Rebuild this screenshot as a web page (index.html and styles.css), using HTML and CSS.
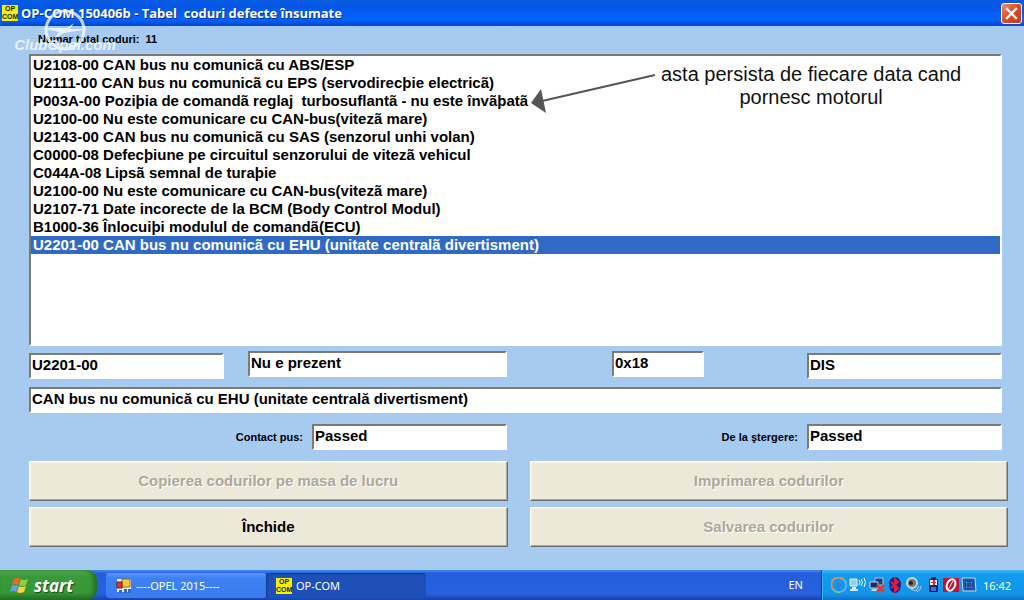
FILE: index.html
```
<!DOCTYPE html>
<html lang="ro">
<head>
  <meta charset="UTF-8">
  <meta name="viewport" content="width=device-width, initial-scale=1.0">
  <title>OP-COM 150406b</title>
  <link rel="stylesheet" href="styles.css">
</head>
<body>
  <header class="titlebar">
    <span class="opcom-icon">OP<br>COM</span>
    <h1>OP-COM 150406b - Tabel&nbsp; coduri defecte însumate</h1>
    <button class="close" aria-label="Close">
      <svg viewBox="0 0 21 21" width="21" height="21">
        <path d="M6 6l9 9M15 6l-9 9" stroke="#fff" stroke-width="2.4" stroke-linecap="square"/>
      </svg>
    </button>
  </header>

  <div class="watermark">
    <svg viewBox="0 0 50 44" width="50" height="44" fill="none">
      <circle cx="25" cy="22" r="19" stroke="#fff" stroke-width="3"/>
      <path d="M0 20h27l7-5-4 6h19l-25 4-10 6 5-7z" fill="#fff"/>
    </svg>
    <span>ClubOpel.com</span>
  </div>

  <main class="window">
    <label class="count" for="codes">Numar total coduri:&nbsp; 11</label>

    <div class="list-wrap">
      <select class="codes" id="codes" size="16">
        <option>U2108-00 CAN bus nu comunicã cu ABS/ESP</option>
        <option>U2111-00 CAN bus nu comunicã cu EPS (servodirecþie electricã)</option>
        <option>P003A-00 Poziþia de comandã reglaj&nbsp; turbosuflantã - nu este învãþatã</option>
        <option>U2100-00 Nu este comunicare cu CAN-bus(vitezã mare)</option>
        <option>U2143-00 CAN bus nu comunicã cu SAS (senzorul unhi volan)</option>
        <option>C0000-08 Defecþiune pe circuitul senzorului de vitezã vehicul</option>
        <option>C044A-08 Lipsã semnal de turaþie</option>
        <option>U2100-00 Nu este comunicare cu CAN-bus(vitezã mare)</option>
        <option>U2107-71 Date incorecte de la BCM (Body Control Modul)</option>
        <option>B1000-36 Înlocuiþi modulul de comandã(ECU)</option>
        <option selected>U2201-00 CAN bus nu comunicã cu EHU (unitate centralã divertisment)</option>
      </select>
      <div class="note">
        <svg viewBox="0 0 134 46" width="134" height="46">
          <path d="M131 6L18 32" stroke="#555" stroke-width="2"/>
          <path d="M7 34L17 20L22 44z" fill="#555"/>
        </svg>
        <p>asta persista de fiecare data cand<br>pornesc motorul</p>
      </div>
    </div>

    <div class="fields">
      <input class="f-code" type="text" value="U2201-00" aria-label="Cod">
      <input class="f-state" type="text" value="Nu e prezent" aria-label="Stare">
      <input class="f-hex" type="text" value="0x18" aria-label="Hex">
      <input class="f-unit" type="text" value="DIS" aria-label="Modul">
    </div>

    <input class="desc" type="text" value="CAN bus nu comunică cu EHU (unitate centrală divertisment)" aria-label="Descriere">

    <div class="checks">
      <label for="contact">Contact pus:</label>
      <input id="contact" type="text" value="Passed">
      <label for="clear">De la ştergere:</label>
      <input id="clear" type="text" value="Passed">
    </div>

    <div class="actions">
      <button disabled>Copierea codurilor pe masa de lucru</button>
      <button disabled>Imprimarea codurilor</button>
      <button>Închide</button>
      <button disabled>Salvarea codurilor</button>
    </div>
  </main>

  <footer class="taskbar">
    <button class="start">
      <svg viewBox="0 0 20 20" width="20" height="20">
        <path d="M4 4q3-2 6 0L8 10q-3-2-6 0z" fill="#f0652f"/>
        <path d="M11 4q3 2 7 0l-2 6q-3 2-7 0z" fill="#8fd03c"/>
        <path d="M2 11q3-2 6 0l-2 6q-3-2-6 0z" fill="#6b9cf5"/>
        <path d="M9 11q3 2 7 0l-2 6q-4 2-7 0z" fill="#fbd23c"/>
      </svg>
      start
    </button>
    <button class="task">
      <svg viewBox="0 0 16 16" width="16" height="16">
        <path d="M1 1h14v13H1z" fill="#e8edf8"/>
        <path d="M6 1h8v8H6z" fill="#f6c935" stroke="#8a6a20"/>
        <path d="M1 4h5v6H1z" fill="#d8392b" stroke="#7b1c14"/>
        <path d="M3 12h3v3H3zM8 11h3v4H8zM12 11h3v4h-3z" fill="#3c62b8"/>
      </svg>
      ----OPEL 2015----
    </button>
    <button class="task active">
      <span class="opcom-icon">OP<br>COM</span>
      OP-COM
    </button>
    <span class="lang">EN</span>
    <div class="tray">
      <svg viewBox="0 0 16 16" width="16" height="16" fill="none">
        <path d="M2 12A7 7 0 0 1 13 3" stroke="#f08a4b" stroke-width="2"/>
        <path d="M13 3a7 7 0 0 1-4 12" stroke="#5fb0ee" stroke-width="2"/>
        <path d="M9 15a7 7 0 0 1-7-3" stroke="#7fc47a" stroke-width="2"/>
        <path d="M6 5l5 3-5 4z" fill="#2f7fe0"/>
      </svg>
      <svg viewBox="0 0 18 16" width="18" height="16" fill="none">
        <path d="M1 2h7v7H1z" fill="#8fd0f8" stroke="#e6f4ff"/>
        <path d="M3 10h4v2h2v2H1v-2h2z" fill="#d9e6f2"/>
        <path d="M10 3q2 2 0 5M12 2q3 3 0 7M15 1q3 4 0 9" stroke="#fff"/>
      </svg>
      <svg viewBox="0 0 16 16" width="16" height="16">
        <path d="M6 1h8v7H6z" fill="#1d3f88" stroke="#b9c7dd"/>
        <path d="M1 5h8v6H1z" fill="#1b2f63" stroke="#c9d2e2"/>
        <path d="M3 12h5v2H2z" fill="#c9d2e2"/>
        <path d="M8 8l7 7M15 8l-7 7" stroke="#e8391f" stroke-width="2.5"/>
      </svg>
      <svg viewBox="0 0 16 16" width="16" height="16" fill="none">
        <ellipse cx="8" cy="8" rx="6" ry="8" fill="#10219c"/>
        <path d="M4 5l7 6-3 3V2l3 3-7 6" stroke="#f01c2c" stroke-width="2"/>
      </svg>
      <svg viewBox="0 0 18 16" width="18" height="16" fill="none">
        <circle cx="7" cy="6" r="5" fill="#777" stroke="#d3d3cc" stroke-width="2"/>
        <circle cx="6" cy="6" r="2" fill="#222"/>
        <path d="M6 12l5 2 3-5M12 15q4-2 4-6" stroke="#b8cbe0"/>
      </svg>
      <svg viewBox="0 0 16 16" width="16" height="16">
        <path d="M6 0h5v2h2v13H4V2h2z" fill="#14236f"/>
        <path d="M5 3h7v5H5z" fill="#fff"/>
        <path d="M8 3h2v2h1v1h-1v2H8V6H6V5h2z" fill="#df2a2a"/>
        <path d="M6 10h5v4H6z" fill="#3c70df"/>
      </svg>
      <svg viewBox="0 0 16 16" width="16" height="16" fill="none">
        <path d="M0 1h16v14H0z" fill="#c8102e"/>
        <ellipse cx="8" cy="8" rx="4" ry="6" transform="rotate(25 8 8)" stroke="#fff" stroke-width="2"/>
        <path d="M5 13l5-9" stroke="#fff"/>
      </svg>
      <svg viewBox="0 0 16 16" width="16" height="16">
        <path d="M1 1h13l1 13H2z" fill="#1c55a8" stroke="#bcd8f4"/>
        <path d="M5 5h6v6H5z" fill="#4d9be0"/>
        <path d="M4 7h8M4 9h8M7 4v8M9 4v8" stroke="#0c3d86"/>
      </svg>
      <time>16:42</time>
    </div>
  </footer>
</body>
</html>
```
FILE: styles.css
```
* {
  box-sizing: border-box;
}

body {
  margin: 0;
  min-height: 100vh;
  display: flex;
  flex-direction: column;
  position: relative;
  background: #a6caf0;
  color: #000;
  font-family: "Liberation Sans", Arial, sans-serif;
  font-size: 15px;
}

button,
input,
select {
  font: inherit;
  color: inherit;
  margin: 0;
}

/* title bar */
.titlebar {
  display: flex;
  align-items: center;
  height: 26px;
  padding: 0 2px;
  gap: 3px;
  background: linear-gradient(#0a5be0, #0458e8 30%, #0563fb 75%, #0446cc);
}

.titlebar h1 {
  flex: 1;
  margin: 0;
  color: #fff;
  font-family: "Open Sans", "Noto Sans", sans-serif;
  font-size: 13px;
  font-weight: bold;
  text-shadow: 1px 1px #0b2f8c;
}

.opcom-icon {
  width: 16px;
  height: 16px;
  background: #f8f000;
  color: #222;
  font: bold 7px/8px "Liberation Sans", Arial, sans-serif;
  text-align: center;
}

.close {
  width: 21px;
  height: 21px;
  padding: 0;
  border: 1px solid #fff;
  border-radius: 3px;
  background: linear-gradient(135deg, #f09070, #dc4a22 50%, #c63a14);
}

.close svg {
  display: block;
  margin: -1px;
}

.watermark {
  position: absolute;
  left: 15px;
  top: 8px;
  width: 100px;
  display: flex;
  flex-direction: column;
  align-items: center;
  color: #fff;
  font-size: 15px;
  font-weight: bold;
  font-style: italic;
  line-height: 16px;
  opacity: 0.75;
  pointer-events: none;
}

.watermark span {
  margin-top: -15px;
}

/* window */
.window {
  flex: 1;
  display: flex;
  flex-direction: column;
  padding: 5px 16px 23px 29px;
  font-weight: bold;
}

.count {
  padding: 0 9px;
  font-size: 11px;
  line-height: 16px;
  margin-bottom: 7px;
}

.list-wrap {
  flex: 1;
  display: flex;
  position: relative;
  margin-right: 6px;
}

.codes,
.window input {
  border: 2px solid;
  border-color: #7b7b72 #fff #fff #7b7b72;
  border-radius: 0;
  background: #fff;
  outline: none;
}

.codes {
  flex: 1;
  padding: 0;
  overflow: hidden;
}

.codes option {
  min-height: 18px;
  padding: 0 2px;
  font-weight: bold;
  line-height: 18px;
}

.codes option:checked {
  background: #316ac5 linear-gradient(#316ac5, #316ac5);
  color: #fff;
  -webkit-text-fill-color: #fff;
}

.note {
  position: absolute;
  left: 495px;
  top: 9px;
  display: flex;
  align-items: flex-start;
  pointer-events: none;
}

.note svg {
  margin-top: 6px;
}

.note p {
  margin: 0;
  padding-left: 3px;
  color: #111;
  font-size: 20px;
  font-weight: normal;
  line-height: 23px;
  text-align: center;
}

.window input {
  width: 100%;
  min-width: 0;
  height: 26px;
  padding: 0 1px 4px;
}

.fields {
  display: grid;
  grid-template-columns: 195fr 24fr 259fr 105fr 92fr 103fr 195fr;
  margin: 5px 6px 0 0;
}

.fields .f-code,
.fields .f-unit {
  margin-top: 2px;
}

.f-state {
  grid-column: 3;
}

.f-hex {
  grid-column: 5;
}

.f-unit {
  grid-column: 7;
}

.window .desc {
  width: auto;
  margin: 8px 6px 11px 0;
}

.checks {
  display: grid;
  grid-template-columns: 283fr 195fr 300fr 195fr;
  align-items: center;
  margin-right: 6px;
}

.checks label {
  padding-right: 9px;
  font-size: 11px;
  text-align: right;
}

.actions {
  display: grid;
  grid-template-columns: 1fr 1fr;
  gap: 6px 22px;
  margin-top: 11px;
}

.actions button {
  height: 40px;
  padding: 0 0 2px;
  border: 1px solid;
  border-color: #fff #6e6e66 #6e6e66 #fff;
  box-shadow: inset -1px -1px #aca899, inset 1px 1px #f6f3e6;
  background: #ece9d8;
  font-weight: bold;
}

.actions button:disabled {
  color: #aca899;
  text-shadow: 1px 1px #fff;
}

/* taskbar */
.taskbar {
  display: flex;
  align-items: stretch;
  height: 30px;
  background: linear-gradient(#3f8cf3, #245edb 12%, #2661e0 80%, #1941a5);
  color: #fff;
  font-family: "Noto Sans", sans-serif;
  font-size: 11px;
}

.start {
  display: flex;
  align-items: center;
  gap: 4px;
  width: 97px;
  padding: 0 10px;
  border: 0;
  border-radius: 0 10px 10px 0;
  background: linear-gradient(#5cb55a, #3a9a3a 20%, #379637 75%, #226f22);
  box-shadow: inset -3px 0 4px #246b24;
  font: italic bold 17px "Open Sans", sans-serif;
  text-shadow: 1px 1px 1px #1c4a1c;
}

.task {
  display: flex;
  align-items: center;
  gap: 4px;
  width: 160px;
  margin: 3px 0 2px;
  padding: 0 10px;
  border: 0;
  border-radius: 3px;
  background: linear-gradient(#5a96fa, #3c81f3 20%, #3a7bee);
}

.start + .task {
  margin-left: 9px;
}

.task.active {
  background: #1e50b8;
  box-shadow: inset 1px 1px 2px #123a8c;
}

.lang {
  margin-left: auto;
  padding-right: 18px;
  line-height: 30px;
}

.tray {
  display: flex;
  align-items: center;
  gap: 2px;
  padding: 0 13px 0 9px;
  border-left: 1px solid #0c3d9c;
  background: linear-gradient(#3fb4f6, #129bee 15%, #1395e8 80%, #0f70c0);
  box-shadow: inset 1px 0 #35b8f8;
}

.tray time {
  margin-left: 4px;
}
```
